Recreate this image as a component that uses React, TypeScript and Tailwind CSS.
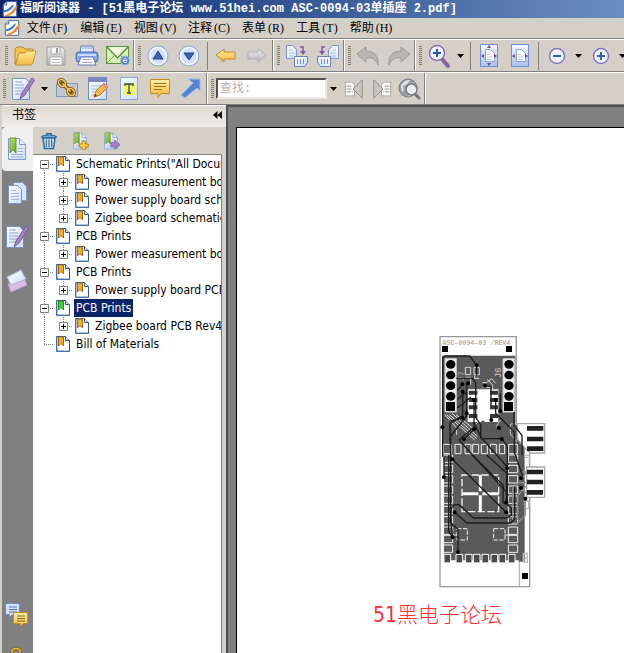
import type { ReactNode } from "react";
import clsx from "clsx";

const UI_FONT = "font-['DejaVu_Sans_Condensed','Noto_Sans_CJK_SC',sans-serif]";
const MONO_FONT = "font-['Liberation_Mono','Noto_Sans_CJK_SC',monospace]";
const SERIF_FONT = "font-['Liberation_Serif','Noto_Sans_CJK_SC',serif]";

const MENUS = [
  ["文件", "(F)"],
  ["编辑", "(E)"],
  ["视图", "(V)"],
  ["注释", "(C)"],
  ["表单", "(R)"],
  ["工具", "(T)"],
  ["帮助", "(H)"],
];

interface Bookmark {
  label: string;
  selected?: boolean;
  children?: string[];
}

const BOOKMARKS: Bookmark[] = [
  {
    label: 'Schematic Prints("All Documents")',
    children: ["Power measurement board schematic", "Power supply board schematic", "Zigbee board schematic"],
  },
  { label: "PCB Prints", children: ["Power measurement board PCB"] },
  { label: "PCB Prints", children: ["Power supply board PCB"] },
  { label: "PCB Prints", selected: true, children: ["Zigbee board PCB Rev4"] },
  { label: "Bill of Materials" },
];

/* ---------- icons ---------- */

function Gradients() {
  return (
    <svg width="0" height="0" className="absolute" aria-hidden="true">
      <defs>
        <linearGradient id="gold" x1="0" y1="0" x2="0" y2="1">
          <stop offset="0" stopColor="#ffeca0" />
          <stop offset="1" stopColor="#f0b93c" />
        </linearGradient>
        <linearGradient id="blue" x1="0" y1="0" x2="0" y2="1">
          <stop offset="0" stopColor="#f4f8ff" />
          <stop offset="1" stopColor="#a9bff0" />
        </linearGradient>
        <linearGradient id="paper" x1="0" y1="0" x2="1" y2="1">
          <stop offset="0" stopColor="#ffffff" />
          <stop offset="1" stopColor="#cfdcf8" />
        </linearGradient>
        <linearGradient id="grey" x1="0" y1="0" x2="0" y2="1">
          <stop offset="0" stopColor="#ededed" />
          <stop offset="1" stopColor="#b4b4b4" />
        </linearGradient>
        <linearGradient id="green" x1="0" y1="0" x2="1" y2="1">
          <stop offset="0" stopColor="#c4e670" />
          <stop offset="1" stopColor="#5f9e24" />
        </linearGradient>
      </defs>
    </svg>
  );
}

function Icon({ children, size = 24 }: { children: ReactNode; size?: number }) {
  return (
    <svg width={size} height={size} viewBox="0 0 24 24" fill="none" className="shrink-0" aria-hidden="true">
      {children}
    </svg>
  );
}

function AppLogo() {
  return (
    <Icon size={16}>
      <path d="M7 1h15v22H2V6z" fill="#fff" stroke="#4d6fb0" strokeWidth="1.5" />
      <path d="M2 6h5V1" fill="#dbe6fa" stroke="#4d6fb0" strokeWidth="1.5" />
      <path d="M3 14c8-1 9-6 15-9-1 6-6 11-15 12z" fill="#3b7fd4" />
      <path d="M5 21c10-2 11-10 18-15-1 9-7 16-18 17z" fill="#f08a24" />
    </Icon>
  );
}

const FolderIcon = () => (
  <Icon>
    <path d="M2 20V5l2-2h6l2 2h8v4H7z" fill="#f4c451" stroke="#b8892b" />
    <path d="M2.500 21 6 9h6l2-2h9l-3 12-2 2z" fill="url(#gold)" stroke="#c4922d" />
  </Icon>
);

const SaveIcon = () => (
  <Icon>
    <path d="M3 3h15l3 3v15H3z" fill="url(#grey)" stroke="#a2a2a2" />
    <path d="M7 3h9v7H7z" fill="#f6f6f6" stroke="#adadad" />
    <path d="M12 4h2v5h-2z" fill="#9b9b9b" />
    <path d="M6 13h12v8H6z" fill="#fafafa" stroke="#b0b0b0" />
    <path d="M8 15.500h8M8 18.500h8" stroke="#b5b5b5" />
  </Icon>
);

const PrintIcon = () => (
  <Icon>
    <path d="M6 2h12l1 7H5z" fill="url(#paper)" stroke="#5476c4" />
    <path d="M7 4h10" stroke="#88a2dc" />
    <rect x="1" y="8" width="22" height="10" rx="3" fill="#8ba9ea" stroke="#4463b5" />
    <path d="M3 11h18" stroke="#cddbfb" strokeWidth="2" />
    <path d="M6 13h12l3 8H3z" fill="#fff" stroke="#5b77b8" />
    <path d="M8 15.500h8M7 18.500h10" stroke="#9aa6bd" />
  </Icon>
);

const MailIcon = () => (
  <Icon>
    <rect x=".5" y="2.500" width="22" height="17" fill="#d9efb8" stroke="#5d9440" />
    <path d="m1 19 8-8M22 19l-8-8" stroke="#79ad58" />
    <path d="m1 3 10.500 11L22 3" fill="#eef8dd" stroke="#5d9440" strokeWidth="1.500" />
    <circle cx="19" cy="16.500" r="4.500" fill="#4d78cc" stroke="#a9c0ee" />
    <path d="M17 16.500h4c0-3-4-3-4 0 0 2.500 3 2.500 4 1.500" stroke="#fff" />
  </Icon>
);

const CircleIcon = ({ down }: { down?: boolean }) => (
  <Icon>
    <circle cx="12" cy="12" r="10" fill="#d3e0fb" stroke="#8ba5dc" />
    <circle cx="12" cy="12" r="8.500" stroke="#f5f8ff" strokeWidth="1.500" />
    <path d={down ? "M7 9h10l-5 7z" : "M7 15h10l-5-8z"} fill="#3b62b0" stroke="#27458a" />
  </Icon>
);

const BackIcon = () => (
  <Icon>
    <path d="m2 11 8-6v3h11v7H10v3z" fill="url(#gold)" stroke="#c48b23" strokeLinejoin="round" />
  </Icon>
);

const ForwardIcon = () => (
  <Icon>
    <path d="m21 11-8-6v3H3v7h10v3z" fill="url(#grey)" stroke="#b0b0b0" strokeLinejoin="round" />
  </Icon>
);

const RotateIcon = ({ left }: { left?: boolean }) => (
  <Icon>
    <g transform={left ? "matrix(-1 0 0 1 24 0)" : undefined}>
      <path d="M1.500 1.500h6l4 4v9h-10z" fill="url(#paper)" stroke="#8096cb" />
      <path d="M4 6h3M4 9h5M4 12h5" stroke="#b0bdde" />
      <path d="M15 3h3v5" stroke="#8555a5" strokeWidth="1.500" />
      <path d="M15 7h6l-3 4z" fill="#8555a5" />
      <path d="M9.500 12.500h13v6l-3 4h-10z" fill="url(#paper)" stroke="#6882c4" />
      <path d="M12.500 15v5M15.500 15v5M18.500 15v5" stroke="#768bc0" />
    </g>
  </Icon>
);

const UndoIcon = ({ redo }: { redo?: boolean }) => (
  <Icon>
    <path
      transform={redo ? "matrix(-1 0 0 1 24 0)" : undefined}
      d="m1 10 9-7v4c8 0 13 5 12 14-2-5-5-8-12-7v4z"
      fill="#b7b6b3"
      stroke="#9c9b98"
    />
  </Icon>
);

const MagnifierIcon = () => (
  <Icon>
    <path d="m15 15 6 7" stroke="#8763a5" strokeWidth="4" strokeLinecap="round" />
    <circle cx="10" cy="9" r="7.500" fill="#f3f6ff" stroke="#8472b4" strokeWidth="1.500" />
    <path d="M6 9h8M10 5v8" stroke="#2855b3" strokeWidth="2" />
  </Icon>
);

const FitIcon = ({ wide }: { wide?: boolean }) => (
  <Icon>
    <path d="M3.500.500h17v22h-17z" fill="url(#blue)" stroke="#6f8fce" />
    <path d="M8.500 5.500h5l4 4v8h-9z" fill="#fff" stroke="#89a2d5" />
    <path d="M10 10.500h3M10 13h5M10 15.500h5" stroke="#b4c4e6" />
    <path d="m4 12 3-2v4zm16 0-3-2v4z" fill="#73479b" />
    {!wide && <path d="m12 1-2 3h4zm0 21-2-3h4z" fill="#73479b" />}
  </Icon>
);

const ZoomIcon = ({ plus }: { plus?: boolean }) => (
  <Icon>
    <circle cx="12" cy="12" r="7.500" fill="#f0f4ff" stroke="#8478b8" strokeWidth="1.500" />
    <path d={plus ? "M8 12h8M12 8v8" : "M8 12h8"} stroke="#2f5db8" strokeWidth="2" />
  </Icon>
);

const NoteIcon = () => (
  <Icon>
    <path d="M1.500 1.500h13l4 4v17h-17z" fill="url(#paper)" stroke="#7890c8" />
    <path d="M4 5h7M4 8h9M4 11h9M4 14h8M4 17h6" stroke="#8ca0d4" />
    <path d="M21 1 11 16l-2 6 5-4L23.500 3z" fill="#a583c4" stroke="#7a569d" />
  </Icon>
);

const LinkIcon = () => (
  <Icon>
    <path d="M1.500 6.500h21v13h-21z" fill="#bfc8d4" stroke="#8095b6" />
    <g stroke="#7d5210" strokeWidth="3">
      <ellipse cx="7" cy="6" rx="3" ry="4" transform="rotate(-45 7 6)" />
      <ellipse cx="16" cy="15" rx="3" ry="4" transform="rotate(-45 16 15)" />
      <path d="m7 6 9 9" strokeWidth="4" strokeLinecap="round" />
    </g>
    <g stroke="#f3cd6a" strokeWidth="1.500">
      <ellipse cx="7" cy="6" rx="3" ry="4" transform="rotate(-45 7 6)" />
      <ellipse cx="16" cy="15" rx="3" ry="4" transform="rotate(-45 16 15)" />
      <path d="m8 7 7 7" strokeLinecap="round" />
    </g>
  </Icon>
);

const EditIcon = () => (
  <Icon>
    <path d="M2.500.500h18v22h-18z" fill="url(#paper)" stroke="#6e8cc8" />
    <path d="M3 1h17v4H3z" fill="#7d84c0" />
    <path d="M5 9h11M5 12h8M5 15h5M5 18h3" stroke="#a9bae0" />
    <path d="m8 20 2-6 8-8 4 4-8 8z" fill="#f7bb45" stroke="#be7926" />
    <path d="m16 8 2-2 4 4-2 2z" fill="#e98d89" />
    <path d="m8 20 1-3 2 2z" fill="#4d3a22" />
  </Icon>
);

const TextIcon = () => (
  <Icon>
    <path d="M3.500.500h17v22h-17z" fill="url(#paper)" stroke="#8aa4dc" />
    <path d="M6 6h12v12H6z" fill="#eff75c" />
    <path d="M8 9V7h8v2M12 7v9M10 16h4" stroke="#3b4658" strokeWidth="1.300" />
  </Icon>
);

const CommentIcon = () => (
  <Icon>
    <path d="M2.500 2.500h19v14H13l-3 4v-4H2.500z" fill="url(#gold)" stroke="#bf8b24" />
    <path d="M6 6.500h12M6 9.500h12M6 12.500h8" stroke="#9d7425" />
  </Icon>
);

const ArrowIcon = () => (
  <Icon>
    <path d="M9 2h12v12l-3-3L6 21l-4-3L14 6z" fill="#5684d4" stroke="#a5bce8" />
  </Icon>
);

const FindIcon = ({ next }: { next?: boolean }) => (
  <Icon size={22}>
    <g transform={next ? "matrix(-1 0 0 1 24 0)" : undefined}>
      <path d="M2.500 4.500h7l3 3v12h-10z" fill="#f8f8f8" stroke="#aaa9a5" />
      <path d="M4 9h5M4 12h5M4 15h5" stroke="#b9b8b4" strokeWidth="1.500" />
      <path d="M21 2v20L11 12z" fill="#c9c7c0" stroke="#8d8c87" strokeLinejoin="round" />
    </g>
  </Icon>
);

const GlobeIcon = () => (
  <Icon>
    <circle cx="10" cy="11" r="9" fill="#9ba1a6" stroke="#73797d" />
    <path d="M3 9c2-5 6-6 9-6l-3 4-4 2 1 4-2 2zm7 6 4 1-3 4z" fill="#dfe3e4" />
    <path d="m17 17 4 4" stroke="#777" strokeWidth="3" strokeLinecap="round" />
    <circle cx="13.500" cy="12.500" r="5.500" fill="#eef0f0" stroke="#777d80" strokeWidth="1.500" />
  </Icon>
);

const TrashIcon = () => (
  <Icon size={18}>
    <path d="M4 8h16l-2 14H6z" fill="#cfe4f8" stroke="#28659c" strokeWidth="2" />
    <path d="M8.500 10v10M12 10v10M15.500 10v10" stroke="#28659c" strokeWidth="1.500" />
    <path d="M2 7c1-4 19-4 20 0zM9 4V2h6v2" fill="#94bce0" stroke="#28659c" strokeWidth="1.500" />
  </Icon>
);

const BookmarkPageIcon = ({ mark, size = 24 }: { mark?: "add" | "go"; size?: number }) => (
  <Icon size={size}>
    <path d="M3.500 1.500h11l6 6v15h-17z" fill="url(#paper)" stroke="#7d9ad0" />
    <path d="M14.500 1.500v6h6" fill="#e5edfb" stroke="#7d9ad0" />
    <path d="M6 17.500h12M6 20h12M13 11.500h5M13 14.500h5" stroke="#9bb1de" />
    <path d="M5 1h6v15l-3-3-3 3z" fill="url(#green)" stroke="#6c9b35" />
    {mark === "add" && (
      <path d="M15 12h4v4h4v4h-4v4h-4v-4h-4v-4h4z" fill="#ffd93a" stroke="#b18314" strokeWidth="1.300" />
    )}
    {mark === "go" && <path d="M12 14h5v-3l7 6-7 6v-3h-5z" fill="#a27cc6" stroke="#8460a8" />}
  </Icon>
);

const PagesIcon = () => (
  <Icon>
    <path d="M8.500 1.500h9l4 4v14h-13z" fill="#dbe5fb" stroke="#7d94cc" />
    <path d="M3.500 4.500h9l4 4v14h-13z" fill="url(#paper)" stroke="#7d94cc" />
    <path d="M6 9.500h5M6 12.500h8M6 15.500h8M6 18.500h8" stroke="#a4b6e0" />
  </Icon>
);

const LayersIcon = () => (
  <Icon>
    <path d="m3 15 16-7 3 8-16 7z" fill="#d7bfe4" stroke="#b79ac8" />
    <path d="m2 8 14-7 5 9-15 6z" fill="url(#paper)" stroke="#a9b5d8" />
  </Icon>
);

const CommentsIcon = () => (
  <Icon>
    <path d="M.500.500h14v11h-7l-3 3v-3h-4z" fill="#d3e0ff" stroke="#7089cc" />
    <path d="M4 4h8M4 6.500h8M4 9h8" stroke="#5674b8" />
    <path d="M8.500 9.500h14v11h-4l-3 3v-3h-7z" fill="url(#gold)" stroke="#c28e24" />
    <path d="M12 13h8M12 15.500h8M12 18h8" stroke="#8a6a22" />
  </Icon>
);

const LockIcon = () => (
  <Icon size={16}>
    <path d="M6 12V7c0-6 12-6 12 0v5" stroke="#8c6b18" strokeWidth="4" />
    <path d="M6 12V7c0-6 12-6 12 0v5" stroke="#efc440" strokeWidth="2" />
    <path d="M3 11h18v12H3z" fill="url(#gold)" stroke="#8c6b18" />
  </Icon>
);

function TreeIcon({ green }: { green?: boolean }) {
  return (
    <svg width="15" height="16" viewBox="0 0 15 16" fill="none" className="ml-[2px] shrink-0" aria-hidden="true">
      <path d="M.500.500h9l4 4v11H.500z" fill="#fff" stroke="#2f5b8f" />
      <path d="M9.500.500v4h4" fill="#dce8f6" stroke="#2f5b8f" />
      <path d="M1 15V1M1 15h12" stroke="#5f89b8" />
      <path d="M2.500 1v9L5 7.500 7.500 10V1z" fill={green ? "#43d13a" : "#f3ae2c"} stroke={green ? "#25901e" : "#a86a18"} />
    </svg>
  );
}

/* ---------- toolbars ---------- */

function Grip() {
  return (
    <svg width="3" height="20" className="mr-px shrink-0" aria-hidden="true">
      <path d="M1.500 0v20" stroke="#857f70" strokeWidth="3" strokeDasharray="1 1" />
    </svg>
  );
}

function Band({ children, last }: { children: ReactNode; last?: boolean }) {
  return (
    <div
      className={clsx(
        "flex shrink-0 items-center pl-[3px]",
        !last && "mr-px border-r border-[#808080] shadow-[1px_0_0_#fff]"
      )}
    >
      <Grip />
      {children}
    </div>
  );
}

function Tool({ label, children, narrow }: { label: string; children: ReactNode; narrow?: boolean }) {
  return (
    <button
      type="button"
      aria-label={label}
      className={clsx("flex h-7 shrink-0 items-center justify-center", narrow ? "w-7" : "w-[31px]")}
    >
      {children}
    </button>
  );
}

function Caret({ label }: { label: string }) {
  return (
    <button type="button" aria-label={label} className="flex h-7 w-[13px] shrink-0 items-center justify-center">
      <svg width="7" height="4" aria-hidden="true">
        <path d="M0 0h7L3.500 4z" fill="#000" />
      </svg>
    </button>
  );
}

const Divider = () => <div className="mr-[2px] ml-[3px] h-7 w-px shrink-0 bg-[#808080]" />;

function MainToolbar() {
  return (
    <div className="flex h-[33px] shrink-0 overflow-hidden border-t border-b border-t-white border-b-[#808080] pl-[2px]">
      <Band>
        <Tool label="打开"><FolderIcon /></Tool>
        <Tool label="保存"><SaveIcon /></Tool>
        <Tool label="打印"><PrintIcon /></Tool>
        <Tool label="邮件"><MailIcon /></Tool>
      </Band>
      <Band>
        <Tool label="上一页"><CircleIcon /></Tool>
        <Tool label="下一页"><CircleIcon down /></Tool>
        <Divider />
        <Tool label="后退"><BackIcon /></Tool>
        <Tool label="前进"><ForwardIcon /></Tool>
      </Band>
      <Band>
        <Tool label="顺时针旋转"><RotateIcon /></Tool>
        <Tool label="逆时针旋转"><RotateIcon left /></Tool>
      </Band>
      <Band>
        <Tool label="撤销"><UndoIcon /></Tool>
        <Tool label="重做"><UndoIcon redo /></Tool>
      </Band>
      <Band last>
        <Tool label="缩放"><MagnifierIcon /></Tool>
        <Caret label="缩放选项" />
        <Divider />
        <Tool label="适合页面"><FitIcon /></Tool>
        <Tool label="适合宽度"><FitIcon wide /></Tool>
        <Divider />
        <Tool label="缩小"><ZoomIcon /></Tool>
        <Caret label="缩小选项" />
        <Tool label="放大"><ZoomIcon plus /></Tool>
        <Caret label="放大选项" />
      </Band>
    </div>
  );
}

function CommentToolbar() {
  return (
    <div className="flex h-[33px] shrink-0 overflow-hidden border-t border-b border-t-white border-b-[#808080]">
      <Band>
        <Tool label="注释"><NoteIcon /></Tool>
        <Caret label="注释选项" />
        <Tool label="链接"><LinkIcon /></Tool>
        <Tool label="编辑"><EditIcon /></Tool>
        <Tool label="文本"><TextIcon /></Tool>
        <Tool label="附注"><CommentIcon /></Tool>
        <Tool label="箭头"><ArrowIcon /></Tool>
      </Band>
      <Band>
        <input
          type="text"
          aria-label="查找"
          placeholder="查找:"
          className={`ml-px h-[21px] w-[111px] border-2 border-t-[#505050] border-r-[#ece9e2] border-b-[#ece9e2] border-l-[#505050] bg-white px-[2px] text-[12px] placeholder:text-[#b4b4b4] ${MONO_FONT}`}
        />
        <Caret label="查找选项" />
        <Tool label="查找上一个" narrow><FindIcon /></Tool>
        <Tool label="查找下一个" narrow><FindIcon next /></Tool>
        <Tool label="高级查找" narrow><GlobeIcon /></Tool>
      </Band>
    </div>
  );
}

/* ---------- bookmark panel ---------- */

// dotted connector with an optional +/- box in the middle
function Guide({ box, up, down }: { box?: "+" | "-"; up?: boolean; down?: boolean }) {
  const lines = (
    <svg width="19" height="18" fill="none" aria-hidden="true">
      <g stroke="#808080" strokeDasharray="1 1">
        {up && <path d="M9.500 0v9" />}
        {down && <path d="M9.500 9v9" />}
        <path d="M9 9.500h10" />
      </g>
      {box && <path d="M5.500 5.500h8v8h-8z" fill="#fff" stroke="#808080" />}
      {box && <path d={box === "+" ? "M7 9.500h5M9.500 7v5" : "M7 9.500h5"} stroke="#000" />}
    </svg>
  );
  if (!box) return lines;
  return (
    <button type="button" aria-label={box === "+" ? "展开" : "折叠"} className="shrink-0">
      {lines}
    </button>
  );
}

function Rail() {
  return (
    <svg width="19" height="18" className="shrink-0" aria-hidden="true">
      <path d="M9.500 0v18" stroke="#808080" strokeDasharray="1 1" />
    </svg>
  );
}

function TreeLabel({ text, selected }: { text: string; selected?: boolean }) {
  return (
    <button
      type="button"
      className={clsx("ml-[3px] h-[18px] shrink-0 px-[2px] leading-[18px]", selected && "bg-[#0a246a] text-white")}
    >
      {text}
    </button>
  );
}

function BookmarkTree() {
  return (
    <ul className="min-h-0 flex-1 overflow-hidden border-t border-r border-[#808080] bg-white pl-[2px] text-[12px] whitespace-nowrap text-black">
      {BOOKMARKS.map((item, i) => (
        <li key={i}>
          <div className="flex h-[18px] items-center">
            <Guide box={item.children ? "-" : undefined} up={i > 0} down={i < BOOKMARKS.length - 1} />
            <TreeIcon green={item.selected} />
            <TreeLabel text={item.label} selected={item.selected} />
          </div>
          {item.children && (
            <ul>
              {item.children.map((child, j) => (
                <li key={child} className="flex h-[18px] items-center">
                  <Rail />
                  <Guide box="+" up down={j < item.children!.length - 1} />
                  <TreeIcon />
                  <TreeLabel text={child} />
                </li>
              ))}
            </ul>
          )}
        </li>
      ))}
    </ul>
  );
}

function SideTab({ label, active, children }: { label: string; active?: boolean; children: ReactNode }) {
  return (
    <button
      type="button"
      aria-label={label}
      className={clsx(
        "flex h-11 w-full shrink-0 items-center justify-center pr-[2px]",
        active && "rounded-l-sm bg-[#f0eff0]"
      )}
    >
      {children}
    </button>
  );
}

function BookmarkPanel() {
  return (
    <aside className="flex w-[226px] shrink-0 flex-col pl-[2px]">
      <header className="flex h-[22px] shrink-0 items-center justify-between border-t border-white bg-linear-to-b from-[#dcd9d2] to-[#efede8] pr-1 pb-1 pl-[10px] text-[12px] text-black">
        <h2>书签</h2>
        <button type="button" aria-label="折叠面板">
          <svg width="9" height="8" aria-hidden="true">
            <path d="M4.500 0v8L0 4zM9 0v8L4.500 4z" fill="#000" />
          </svg>
        </button>
      </header>
      <div className="flex min-h-0 flex-1">
        <nav className="flex w-[31px] shrink-0 flex-col overflow-hidden bg-[#808080]">
          <SideTab label="书签" active><BookmarkPageIcon /></SideTab>
          <SideTab label="页面"><PagesIcon /></SideTab>
          <SideTab label="注释"><NoteIcon /></SideTab>
          <SideTab label="图层"><LayersIcon /></SideTab>
          <div className="mt-auto">
            <SideTab label="附注"><CommentsIcon /></SideTab>
            <button type="button" aria-label="安全" className="flex h-4 w-full justify-center overflow-hidden pt-[10px] pr-1">
              <LockIcon />
            </button>
          </div>
        </nav>
        <div className="flex min-w-0 flex-1 flex-col pr-1">
          <div className="flex h-[27px] shrink-0 items-center">
            <Tool label="删除书签"><TrashIcon /></Tool>
            <Tool label="新建书签"><BookmarkPageIcon mark="add" size={18} /></Tool>
            <Tool label="转到书签"><BookmarkPageIcon mark="go" size={18} /></Tool>
          </div>
          <BookmarkTree />
        </div>
      </div>
    </aside>
  );
}

/* ---------- document ---------- */

const PINS = [103, 135, 167, 199];
const SIDE_PADS = [375, 406, 437, 468, 498, 529, 560, 591, 616, 645];
const BOTTOM_PADS = [42, 78, 106, 130, 156, 183, 207, 235];
const VIAS = [
  [140, 106], [97, 163], [114, 160], [165, 167], [98, 185], [132, 210], [197, 210], [110, 250], [98, 264],
  [184, 270], [211, 243], [37, 292], [133, 297], [207, 294], [102, 328], [215, 327], [67, 388], [231, 415],
  [42, 442], [273, 444], [273, 474], [286, 506], [229, 517], [74, 547], [229, 547], [68, 622], [84, 666],
];

function Board() {
  return (
    <svg width="110" height="254" viewBox="24 15 330 762" fill="none" role="img" aria-label="PCB">
      <defs>
        <pattern id="copper" width="6" height="6" patternUnits="userSpaceOnUse">
          <path d="M0 0h6v6H0z" fill="#585858" />
          <path d="M0 0h2v2H0z" fill="#686868" />
        </pattern>
      </defs>

      <path d="M30 20h229v260l28 28h12v462H30z" fill="#fff" stroke="#989898" strokeWidth="4" />
      <path d="M268 695v73" stroke="#a8a8a8" strokeWidth="3" />
      <path d="M36 77h220v205l28 26v387H42V380h-6z" fill="url(#copper)" />

      <text x="37" y="44" fontSize="20" fontWeight="bold" fill="#b0b0b0" fontFamily="Liberation Mono">
        ASC-0094-03 /REV4
      </text>
      <path d="M36 48h18v18H36zM228 48h18v18h-18zM276 729h18v18h-18z" fill="#000" />

      {/* pin headers */}
      <path d="M45 86h34v160H45zM219 86h34v160h-34z" fill="#eee" stroke="#c8c8c8" strokeWidth="3" />
      {PINS.map((y) => (
        <g key={y} fill="#000">
          <ellipse cx="62" cy={y} rx="14" ry="13" />
          <ellipse cx="237" cy={y} rx="14" ry="13" />
        </g>
      ))}
      <path d="M48 216h27v27H48zM222 216h27v27h-27z" fill="#000" />
      <text transform="translate(212 144) rotate(-90)" fontSize="26" fill="#c8c8c8" fontFamily="Liberation Mono">
        J6
      </text>
      <text transform="translate(103 154) rotate(-90)" fontSize="26" fill="#a8a8a8" fontFamily="Liberation Mono">
        J7
      </text>

      {/* SOIC footprint */}
      <path d="M142 178h38v98h-14l-7-5-7 5h-10z" fill="#fff" />
      <path d="M113 178h30v98h-30zM178 178h27v98h-27z" fill="#fff" />
      <path
        d="M116 182h26v12h-26zM116 204h26v12h-26zM116 226h26v12h-26zM116 252h26v12h-26zM180 182h24v12h-24zM180 204h24v12h-24zM180 226h24v12h-24zM180 252h24v12h-24z"
        fill="#383838"
      />
      <path
        d="M106 112h16v22h-16zM132 112h16v22h-16zM106 142h16v22M148 145h-14v-8M158 158h12l14-12 14 14M172 148l15 16v14M158 172h26"
        stroke="#d8d8d8"
        strokeWidth="3"
      />
      <path d="M58 254l82 72M50 254l84 76M66 250l76 69M78 254l58 47M45 254l35 40v20" stroke="#e0e0e0" strokeWidth="3" />
      <path d="M259 282h-18v30l20 24M198 290l14-20M130 290l18-18" stroke="#bdbdbd" strokeWidth="3" />

      {/* mid-board passives */}
      <g stroke="#f0f0f0" strokeWidth="3">
        <path d="M40 343h24v28H40zM75 343h18v28H75zM105 343h18v28h-18zM128 343h18v28h-18zM154 343h18v28h-18zM181 343h18v28h-18zM208 343h16v28h-16zM236 343h26v28h-26z" />
        {SIDE_PADS.map((y) => (
          <path key={y} d={`M36 ${y}h32v22H36zM235 ${y}h28v22h-28z`} />
        ))}
        <path d="M81 596h31v34H81zM191 596h34v34h-34zM224 615h14M68 615h13" strokeDasharray="13 5" />
        <path d="M96 435h110v110H96z" strokeWidth="4" strokeDasharray="22 7" />
        <path d="M151 435v110M96 491h110" stroke="#fff" strokeWidth="9" strokeDasharray="49 12" />
      </g>

      {/* bottom edge pads */}
      <path d="M38 694h228" stroke="#fff" strokeWidth="6" />
      <g fill="#4a4a4a" stroke="#fff" strokeWidth="3">
        {BOTTOM_PADS.map((x) => (
          <path key={x} d={`M${x} 697v-24h20v24`} />
        ))}
      </g>

      {/* side connectors */}
      <path d="M262 281h82v88h-43l-15-14-24-28zM290 411h54v91h-54z" fill="#fff" stroke="#a8a8a8" strokeWidth="4" />
      <path
        d="M291 288h49v14h-49zM291 320h49v14h-49zM291 349h49v14h-49zM291 419h48v14h-48zM291 449h48v14h-48zM291 480h48v14h-48z"
        fill="#202020"
      />
      <path d="M282 376h16v24M282 382h12M280 513h16v22h-10M280 670h12v26h-12zM284 684h8" stroke="#bbb" strokeWidth="4" />
      <path
        d="M290 426h-17M290 458h-24l-18 18v98M290 466l-28 32v72M286 506v50l-26 25M290 490l-17-16M273 444l17-16"
        stroke="#909090"
        strokeWidth="4"
      />

      {/* traces */}
      <g stroke="#1c1c1c" strokeWidth="4" strokeLinejoin="round">
        <path d="M38 380V84l6-6h75l21 28v30" />
        <path d="M79 145h48l10 12v106l15 20v38l80 90v100" />
        <path d="M165 167l18 2v60M197 210v40l56 56v60l25 72" />
        <path d="M211 190v53M252 246v40l24 30v60" />
        <path d="M98 185v72l-38 24v60M110 160v98l-48 60v250l6 54M98 264l-40 10" />
        <path d="M132 210v82l-45 38 143 157v30M98 163l-16 18M82 208l28-22M82 234l40-32" />
        <path d="M133 297l-31 31M133 280l22 46h60l17 24v65" />
        <path d="M67 388l162 159M126 375l93 90v52l25 15v24l-14 8H130l-42-40H74l-12 12v42l22 20v68" />
        <path d="M74 547l36 32h132l12-12V470M170 375l60 55v90M42 380v62M56 375v230l12 17" />
      </g>
      <g fill="#000">
        {VIAS.map(([x, y]) => (
          <circle key={`${x}-${y}`} cx={x} cy={y} r="6" />
        ))}
      </g>
    </svg>
  );
}

function DocumentView() {
  return (
    <main className="flex min-w-0 flex-1 overflow-hidden border-t-2 border-l-2 border-[#505050] bg-[#808080] pt-5 pl-2">
      <article className="min-w-0 flex-1 overflow-hidden border-t border-l border-black bg-white pt-[207px]">
        <div className="ml-[201px]">
          <Board />
        </div>
        <p className={`mt-3 ml-[136px] text-[21px] leading-7 font-light whitespace-nowrap text-[#fb3030] ${UI_FONT}`}>
          51黑电子论坛
        </p>
      </article>
    </main>
  );
}

export default function App() {
  return (
    <div className={`flex h-screen flex-col overflow-hidden bg-[#d4d0c8] ${UI_FONT}`}>
      <Gradients />
      <div className="flex h-[18px] shrink-0 items-center gap-[2px] overflow-hidden bg-linear-to-r from-[#0a246a] to-[#6c8fc2] pl-[2px]">
        <AppLogo />
        <h1 className={`text-[12px] leading-[18px] font-bold whitespace-pre text-white ${MONO_FONT}`}>
          福昕阅读器 - [51黑电子论坛 www.51hei.com ASC-0094-03单插座 2.pdf]
        </h1>
      </div>
      <nav className="flex h-[21px] shrink-0 items-center border-b border-[#808080] pl-1">
        <AppLogo />
        {MENUS.map(([name, key]) => (
          <button
            key={name}
            type="button"
            className={`flex w-[54px] shrink-0 items-center justify-center gap-[2px] text-[12px] leading-5 text-black ${SERIF_FONT}`}
          >
            {name}
            <span>{key}</span>
          </button>
        ))}
      </nav>
      <MainToolbar />
      <CommentToolbar />
      <div className="flex min-h-0 flex-1">
        <BookmarkPanel />
        <DocumentView />
      </div>
    </div>
  );
}
